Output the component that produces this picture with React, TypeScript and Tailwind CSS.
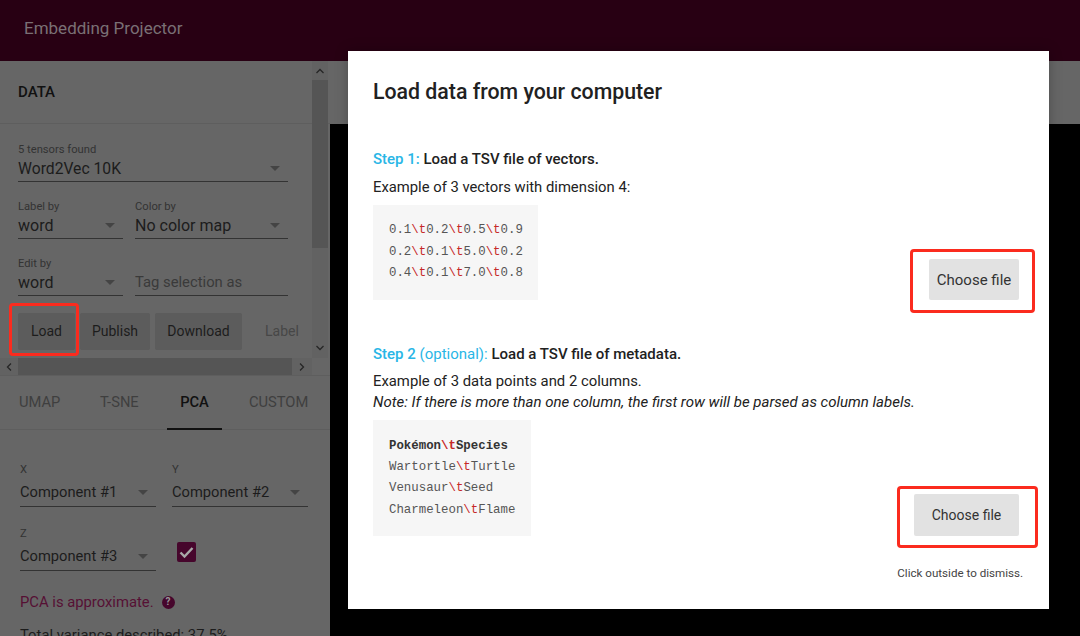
const roboto = "font-['Roboto',sans-serif]"

const Caret = () => <span className="h-0 w-0 border-x-[5px] border-t-[5px] border-x-transparent border-t-[#444]" />

type DropdownProps = { label: string; value: string; width: string; valueSize?: string; tall?: boolean }

const Dropdown = ({ label, value, width, valueSize = 'text-[16px]', tall }: DropdownProps) => (
  <div className={width}>
    <div className={`text-[11.2px] leading-[13px] text-[#333] ${tall ? 'h-[16px]' : 'h-[13px]'}`}>{label}</div>
    <div className={`flex items-center justify-between border-b border-[#333] pr-[8px] ${tall ? 'h-[28px]' : 'h-[26px]'}`}>
      <span className={`${valueSize} text-[#1c1c1c]`}>{value}</span>
      <Caret />
    </div>
  </div>
)

const Tsv = ({ parts }: { parts: string[] }) => (
  <div>
    {parts.map((part, i) => (
      <span key={i}>
        {i > 0 && <span className="text-[#c62828]">\t</span>}
        {part}
      </span>
    ))}
  </div>
)

const ChooseFile = ({ className, frame }: { className: string; frame: string }) => (
  <div className="relative">
    <button className={`rounded-[2px] bg-[#e2e2e2] text-[#333] ${className}`}>Choose file</button>
    <div className={`absolute rounded-[4px] border-[3px] border-[#fb2b1e] ${frame}`} />
  </div>
)

const ArrowUp = () => (
  <svg width="10" height="6" viewBox="0 0 10 6" fill="none" stroke="#262626" strokeWidth="1.3">
    <path d="M1.5 5 5 1.5 8.5 5" />
  </svg>
)

const App = () => {
  return (
    <div className={`flex h-[636px] w-[1080px] flex-col overflow-hidden bg-black ${roboto}`}>
      <header className="flex h-[61px] shrink-0 items-center bg-[#280013] pb-[4px] pl-[24px] text-[17px] text-[#7a7075]">
        Embedding Projector
      </header>

      <div className="relative flex min-h-0 flex-1">
        <aside className="flex w-[330px] shrink-0 flex-col overflow-hidden bg-[#666]">
          <div className="relative h-[314px] shrink-0">
            <div className="flex h-[63px] items-center border-b border-[#5e5e5e] pl-[18px] pt-[1px] text-[15px] font-medium text-[#111]">
              DATA
            </div>
            <div className="pl-[18px] pt-[19px]">
              <Dropdown label="5 tensors found" value="Word2Vec 10K" width="w-[270px]" valueSize="text-[15.7px]" />
              <div className="mt-[18px] flex gap-[12px]">
                <Dropdown label="Label by" value="word" width="w-[105px]" />
                <Dropdown label="Color by" value="No color map" width="w-[153px]" />
              </div>
              <div className="mt-[18px] flex gap-[12px]">
                <Dropdown label="Edit by" value="word" width="w-[105px]" />
                <div className="w-[153px]">
                  <div className="h-[13px]" />
                  <div className="flex h-[26px] items-center border-b border-[#333] text-[14.8px] text-[#3a3a3a]">
                    Tag selection as
                  </div>
                </div>
              </div>
              <div className="relative mt-[17px] flex h-[37px] gap-[5px] text-[14px] text-[#1c1c1c]">
                <button className="w-[57px] rounded-[2px] bg-[#5c5c5c]">Load</button>
                <button className="w-[70px] rounded-[2px] bg-[#5c5c5c]">Publish</button>
                <button className="w-[87px] rounded-[2px] bg-[#5c5c5c]">Download</button>
                <button className="ml-[18px] text-[#474747]">Label</button>
                <div className="absolute -left-[9px] -top-[10px] h-[53px] w-[70px] rounded-[4px] border-[3px] border-[#fb2b1e]" />
              </div>
            </div>
            <div className="absolute right-[2px] top-0 flex h-[297px] w-[16px] flex-col items-center bg-[#626262]">
              <div className="flex h-[19px] items-center">
                <ArrowUp />
              </div>
              <div className="h-[168px] w-full bg-[#555]" />
              <div className="mt-auto flex h-[19px] rotate-180 items-center">
                <ArrowUp />
              </div>
            </div>
            <div className="absolute bottom-0 left-0 flex h-[17px] w-[312px] items-center bg-[#626262]">
              <div className="flex w-[18px] -rotate-90 justify-center">
                <ArrowUp />
              </div>
              <div className="h-full w-[274px] bg-[#555]" />
              <div className="flex w-[20px] rotate-90 justify-center">
                <ArrowUp />
              </div>
            </div>
          </div>

          <div className="flex h-[55px] shrink-0 border-y border-[#5e5e5e] pl-[19px] text-[14.7px] text-[#3f3f3f]">
            <div className="flex w-[81px] items-center">UMAP</div>
            <div className="flex w-[67px] items-center">T-SNE</div>
            <div className="flex h-[54px] w-[55px] items-center justify-center border-b-2 border-[#111] font-medium text-[#111]">
              PCA
            </div>
            <div className="ml-[27px] flex items-center">CUSTOM</div>
          </div>

          <div className="px-[20px] pt-[33px]">
            <div className="flex gap-[16px]">
              <Dropdown label="X" value="Component #1" width="w-[136px]" valueSize="text-[14.7px]" tall />
              <Dropdown label="Y" value="Component #2" width="w-[136px]" valueSize="text-[14.7px]" tall />
            </div>
            <div className="mt-[20px] flex gap-[21px]">
              <Dropdown label="Z" value="Component #3" width="w-[136px]" valueSize="text-[14.7px]" tall />
              <div className="mt-[15px] flex h-[20px] w-[19px] items-center justify-center rounded-[2px] bg-[#46062c]">
                <svg width="15" height="13" viewBox="0 0 15 13" fill="none" stroke="#a8a8a8" strokeWidth="2.4">
                  <path d="M1.5 6.5 5.5 10.5 13.5 2" />
                </svg>
              </div>
            </div>
            <div className="mt-[20px] flex items-center gap-[8px] text-[14.8px] leading-[22px] text-[#561034]">
              PCA is approximate.
              <span className="flex h-[13px] w-[13px] items-center justify-center rounded-full bg-[#46062c] text-[10px] font-bold leading-none text-[#999]">
                ?
              </span>
            </div>
            <div className="mt-[11px] text-[14.8px] leading-[22px] text-[#1c1c1c]">Total variance described: 37.5%</div>
          </div>
        </aside>

        <div className="flex-1">
          <div className="h-[63px] bg-[#666]" />
        </div>

        <section className="absolute left-[348px] top-[-10px] flex h-[558px] w-[701px] flex-col bg-white px-[25px] pt-[25px] text-[15px] leading-[18px] text-[#222] shadow-[0_0_12px_rgba(0,0,0,0.25)]">
          <h2 className="text-[21.3px] font-medium leading-[32px] text-[#212121]">Load data from your computer</h2>

          <div className="mt-[42px] font-medium text-[#212121]">
            <span className="text-[#29b6e6]">Step 1:</span> Load a TSV file of vectors.
          </div>
          <div className="mt-[10px] text-[14.8px]">Example of 3 vectors with dimension 4:</div>
          <div className="mt-[9px] flex items-start justify-between">
            <div className="h-[95px] w-[165px] bg-[#f6f6f6] pl-[16px] pt-[15px] font-['Liberation_Mono',monospace] text-[12.4px] leading-[21.5px] text-[#555]">
              <Tsv parts={['0.1', '0.2', '0.5', '0.9']} />
              <Tsv parts={['0.2', '0.1', '5.0', '0.2']} />
              <Tsv parts={['0.4', '0.1', '7.0', '0.8']} />
            </div>
            <div className="mr-[5px] mt-[54px]">
              <ChooseFile className="h-[41px] w-[90px] text-[15px]" frame="-bottom-[13px] -left-[19px] -right-[16px] -top-[10px]" />
            </div>
          </div>

          <div className="mt-[45px] font-medium text-[#212121]">
            <span className="text-[#29b6e6]">
              Step 2 <span className="font-normal">(optional):</span>
            </span>{' '}
            Load a TSV file of metadata.
          </div>
          <div className="mt-[9px] text-[14.85px]">Example of 3 data points and 2 columns.</div>
          <div className="mt-[3px] italic">
            Note: If there is more than one column, the first row will be parsed as column labels.
          </div>
          <div className="mt-[9px] flex items-start justify-between">
            <div className="h-[116px] w-[158px] bg-[#f6f6f6] pl-[16px] pt-[16px] font-['Liberation_Mono',monospace] text-[12.4px] leading-[21.2px] text-[#555]">
              <div className="font-bold text-[#333]">
                <Tsv parts={['Pokémon', 'Species']} />
              </div>
              <Tsv parts={['Wartortle', 'Turtle']} />
              <Tsv parts={['Venusaur', 'Seed']} />
              <Tsv parts={['Charmeleon', 'Flame']} />
            </div>
            <div className="mr-[5px] mt-[74px]">
              <ChooseFile className="h-[42px] w-[105px] text-[14px]" frame="-bottom-[12px] -left-[17px] -right-[19px] -top-[8px]" />
            </div>
          </div>
          <div className="mt-[30px] self-end pr-[1px] text-[11.6px] leading-[14px] text-[#444]">Click outside to dismiss.</div>
        </section>
      </div>
    </div>
  )
}

export default App
